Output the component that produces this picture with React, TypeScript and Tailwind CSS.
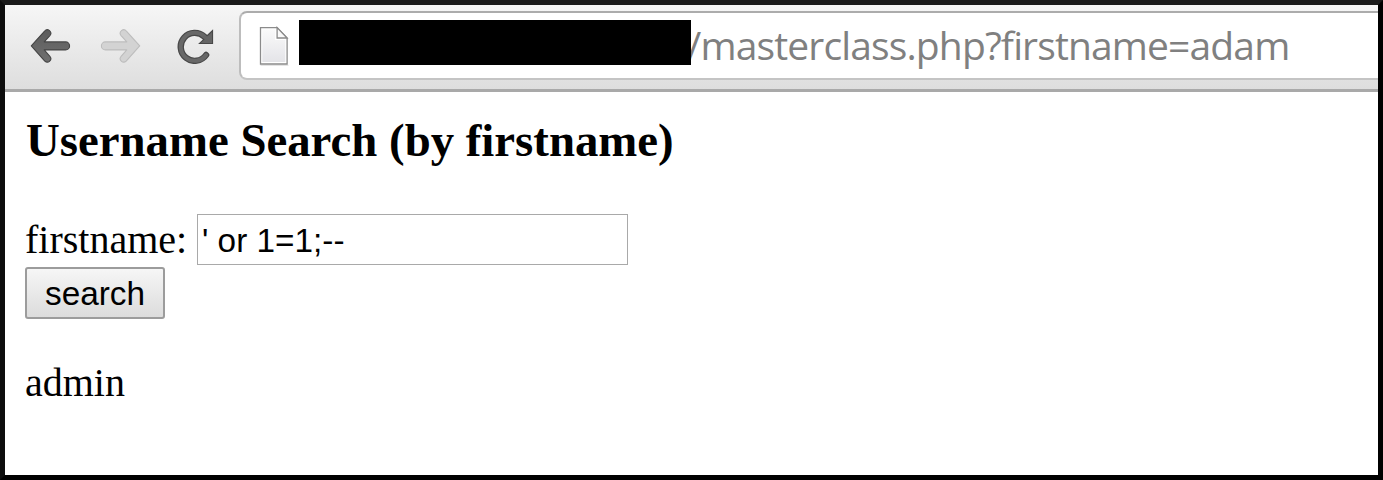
function BackIcon() {
  return (
    <svg width="41" height="36" viewBox="0 0 41 36" className="block shrink-0">
      <defs>
        <linearGradient id="back" x1="0" y1="0" x2="0" y2="1">
          <stop offset="0" stopColor="#5c5c5c" />
          <stop offset="1" stopColor="#707070" />
        </linearGradient>
      </defs>
      <path
        d="M1.3 16.8 L14.6 2.1 A3.3 3.3 0 0 1 19.9 6.6 L14.2 12.9 H35.6 A3.9 3.9 0 0 1 35.6 20.9 H14.2 L19.9 27.4 A3.3 3.3 0 0 1 14.6 31.9 Z"
        transform="translate(0 1)"
        fill="url(#back)"
        stroke="#454545"
        strokeWidth="1.1"
        strokeLinejoin="round"
      />
    </svg>
  );
}

function ForwardIcon() {
  return (
    <svg width="41" height="36" viewBox="0 0 41 36" className="block shrink-0">
      <path
        d="M39.7 16.8 L26.4 2.1 A3.3 3.3 0 0 0 21.1 6.6 L26.8 12.9 H5.4 A3.9 3.9 0 0 0 5.4 20.9 H26.8 L21.1 27.4 A3.3 3.3 0 0 0 26.4 31.9 Z"
        transform="translate(0 1)"
        fill="#d3d3d3"
        stroke="#bdbdbd"
        strokeWidth="1.1"
        strokeLinejoin="round"
      />
    </svg>
  );
}

function ReloadIcon() {
  return (
    <svg width="37" height="36" viewBox="-0.5 0 37 36" className="block shrink-0">
      <path d="M28.6 26.6 A14 14 0 1 1 27 8.4" transform="translate(0 .4)" fill="none" stroke="#484848" strokeWidth="6.4" strokeLinecap="round" />
      <path d="M35.6 1.2 V16 H20.6 L25.4 11.4 L24 7 L29.5 7 Z" fill="#484848" />
      <path d="M28.6 26.6 A14 14 0 1 1 27 8.4" transform="translate(0 .4)" fill="none" stroke="#686868" strokeWidth="4" strokeLinecap="round" />
      <path d="M34.5 4 V15 H23.2 L27.4 11 L25 8 L30 8.3 Z" fill="#656565" />
    </svg>
  );
}

function PageIcon() {
  return (
    <svg width="30" height="40" viewBox="-0.5 0 30 40" className="block shrink-0">
      <defs>
        <linearGradient id="sheet" x1="0" y1="0" x2="0" y2="1">
          <stop offset="0" stopColor="#fafafa" />
          <stop offset="1" stopColor="#e4e4e8" />
        </linearGradient>
      </defs>
      <path d="M1 39.3 H29" stroke="#dedede" strokeWidth="1" />
      <path d="M1 1.6 H17.6 L27.6 12 V38 H1 Z" fill="#fff" stroke="#8b8b8b" strokeWidth="1.3" />
      <path d="M2.8 3.4 H15.6 V14 H25.8 V36 H2.8 Z" fill="url(#sheet)" />
      <path d="M17.6 1.6 V12 H27.6 Z" fill="#fafafa" stroke="#8b8b8b" strokeWidth="1.3" />
    </svg>
  );
}

export default function App() {
  return (
    <div className="flex h-[480px] w-[1383px] flex-col overflow-hidden border-[5px] border-t-[#1a1a1a] border-r-black border-b-black border-l-[#0d0d0d] bg-white text-black">
      <header className="flex h-[87px] shrink-0 items-start border-b-[3px] border-[#a9a9a9] bg-linear-to-b from-[#f6f6f6] to-[#dedede]">
        <nav className="flex pt-[23px] pl-[25px]">
          <BackIcon />
          <span className="w-[29px]" />
          <ForwardIcon />
          <span className="w-[36px]" />
          <ReloadIcon />
        </nav>
        <div className="mt-[6px] ml-[25px] flex h-[69px] min-w-0 flex-1 items-start rounded-l-[8px] border-2 border-r-0 border-t-[#acacac] border-b-[#c4c4c4] border-l-[#bdbdbd] bg-white">
          <div className="pt-[13px] pl-[18px]">
            <PageIcon />
          </div>
          <div className="z-10 mt-[7px] ml-[10px] h-[45px] w-[392px] shrink-0 bg-black" />
          <div className="mt-[5px] -ml-[4px] font-['Open_Sans',sans-serif] text-[39px] leading-[54px] tracking-[-0.86px] whitespace-nowrap text-[#808080]">
            /masterclass.php?firstname=adam
          </div>
        </div>
      </header>
      <main className="flex flex-col items-start pt-[21px] pl-5 font-['Liberation_Serif',serif] text-[40px]">
        <h3 className="pl-px text-[46.8px] leading-[54px] font-bold whitespace-nowrap">Username Search (by firstname)</h3>
        <div className="mt-[47px] flex h-[51px] items-start">
          <label htmlFor="firstname" className="w-[172px] leading-[51px] whitespace-nowrap">firstname:</label>
          <input
            id="firstname"
            type="text"
            defaultValue="' or 1=1;--"
            className="h-[51px] w-[431px] border border-[#a9a9a9] bg-white px-1 pt-[3px] pb-0 font-['Liberation_Sans',sans-serif] text-[33.33px] leading-[46px] outline-none"
          />
        </div>
        <button className="mt-[2px] h-[52px] w-[140px] rounded-[3px] border-2 border-[#9c9c9c] bg-linear-to-b from-[#f6f6f6] to-[#dcdcdc] pt-px font-['Liberation_Sans',sans-serif] text-[33.33px] leading-[47px]">
          search
        </button>
        <p className="mt-[41px] leading-[46px]">admin</p>
      </main>
    </div>
  );
}
